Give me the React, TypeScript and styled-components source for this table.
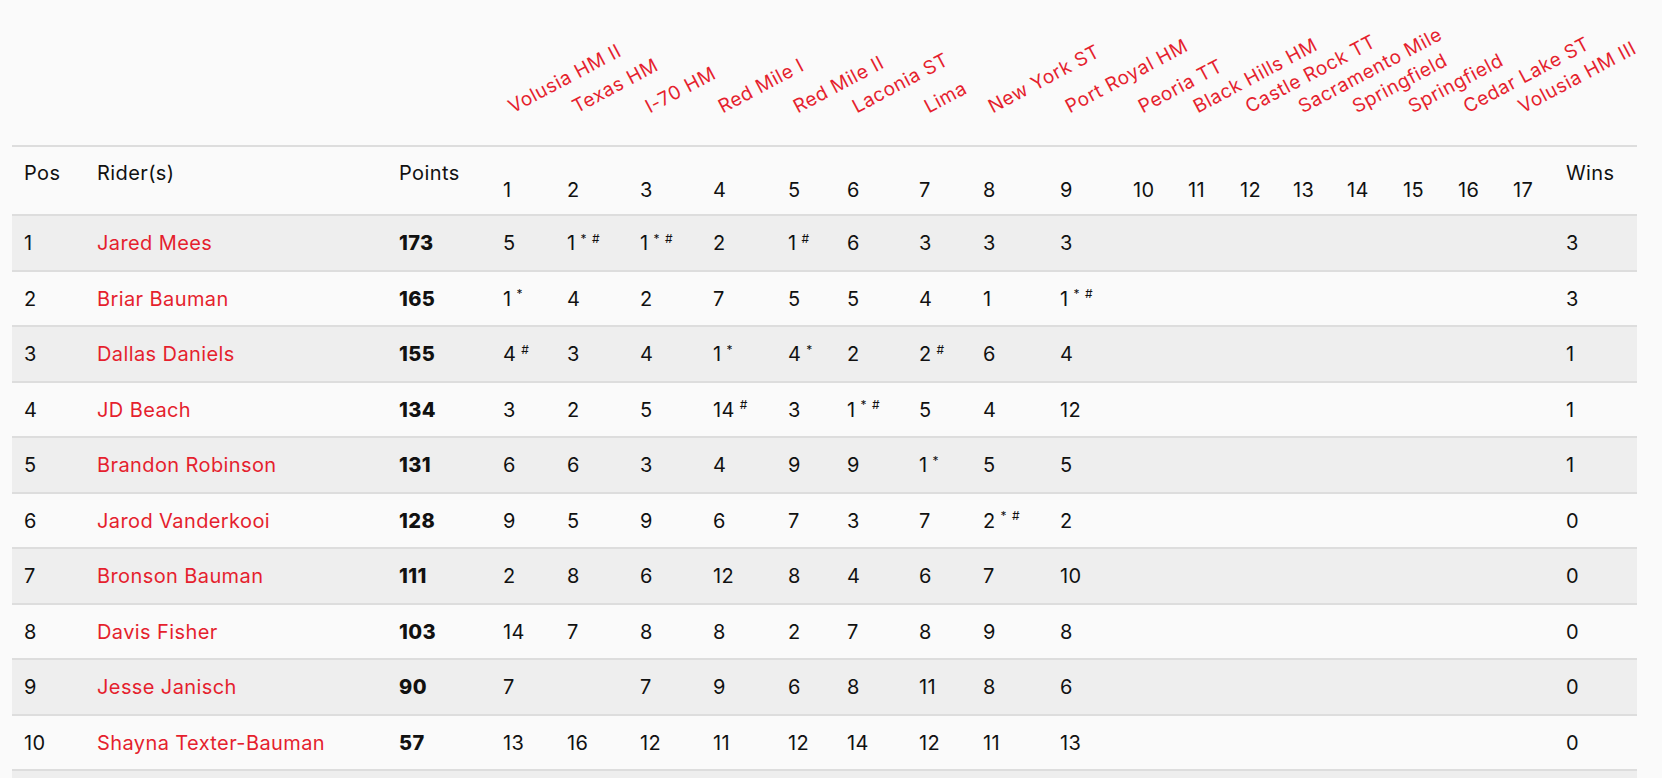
import React from "react";
import styled, { createGlobalStyle } from "styled-components";

const GlobalStyle = createGlobalStyle`
  html, body {
    margin: 0;
    padding: 0;
    background: #fafafa;
  }
  body {
    font-family: Inter, "Noto Sans", "Liberation Sans", sans-serif;
    color: #111;
  }
`;

const Page = styled.div`
  padding: 0 12px;
`;

const Table = styled.table`
  width: 1625px;
  table-layout: fixed;
  border-collapse: separate;
  border-spacing: 0;
  font-size: 20px;
  letter-spacing: 0.4px;
`;

const LabelCell = styled.th`
  height: 118px;
  padding: 0 0 27px 12px;
  vertical-align: bottom;
  text-align: left;
  font-weight: 400;
  border-bottom: 2px solid #dddddd;
`;

const RaceLabel = styled.div`
  white-space: nowrap;
  font-size: 19px;
  letter-spacing: 0.6px;
  line-height: 22px;
  color: #e51f2e;
  transform-origin: 0 100%;
  transform: translateX(12px) rotate(-28deg);
`;

const HeadCell = styled.th<{ $bottom?: boolean }>`
  height: 43px;
  padding: ${(p) => (p.$bottom ? "12px 12px 10px 12px" : "12px")};
  vertical-align: ${(p) => (p.$bottom ? "bottom" : "top")};
  text-align: left;
  font-weight: 400;
  line-height: 28px;
  white-space: nowrap;
  border-bottom: 2px solid #dddddd;
`;

const Row = styled.tr<{ $striped: boolean }>`
  background: ${(p) => (p.$striped ? "#eeeeee" : "transparent")};
`;

const Cell = styled.td<{ $bold?: boolean }>`
  padding: 13px 12px 11px 12px;
  line-height: 29.5px;
  vertical-align: middle;
  text-align: left;
  white-space: nowrap;
  font-weight: ${(p) => (p.$bold ? 800 : 400)};
  border-bottom: 2px solid #dddddd;
`;

const RiderLink = styled.a`
  color: #e51f2e;
  text-decoration: none;
`;

const Mark = styled.span`
  font-size: 12px;
  line-height: 0;
  vertical-align: 0.62em;
  margin-left: 5px;
`;

const colWidths = [
  73, 302, 104, 64, 73, 73, 75, 59, 72, 64, 77, 73, 55, 52, 53, 54, 56, 55, 55,
  53, 83,
];

const races = [
  "Volusia HM II",
  "Texas HM",
  "I-70 HM",
  "Red Mile I",
  "Red Mile II",
  "Laconia ST",
  "Lima",
  "New York ST",
  "Port Royal HM",
  "Peoria TT",
  "Black Hills HM",
  "Castle Rock TT",
  "Sacramento Mile",
  "Springfield",
  "Springfield",
  "Cedar Lake ST",
  "Volusia HM III",
];

type Rider = {
  pos: number;
  name: string;
  points: number;
  results: string[];
  wins: number;
};

const riders: Rider[] = [
  { pos: 1, name: "Jared Mees", points: 173, results: ["5", "1*#", "1*#", "2", "1#", "6", "3", "3", "3"], wins: 3 },
  { pos: 2, name: "Briar Bauman", points: 165, results: ["1*", "4", "2", "7", "5", "5", "4", "1", "1*#"], wins: 3 },
  { pos: 3, name: "Dallas Daniels", points: 155, results: ["4#", "3", "4", "1*", "4*", "2", "2#", "6", "4"], wins: 1 },
  { pos: 4, name: "JD Beach", points: 134, results: ["3", "2", "5", "14#", "3", "1*#", "5", "4", "12"], wins: 1 },
  { pos: 5, name: "Brandon Robinson", points: 131, results: ["6", "6", "3", "4", "9", "9", "1*", "5", "5"], wins: 1 },
  { pos: 6, name: "Jarod Vanderkooi", points: 128, results: ["9", "5", "9", "6", "7", "3", "7", "2*#", "2"], wins: 0 },
  { pos: 7, name: "Bronson Bauman", points: 111, results: ["2", "8", "6", "12", "8", "4", "6", "7", "10"], wins: 0 },
  { pos: 8, name: "Davis Fisher", points: 103, results: ["14", "7", "8", "8", "2", "7", "8", "9", "8"], wins: 0 },
  { pos: 9, name: "Jesse Janisch", points: 90, results: ["7", "", "7", "9", "6", "8", "11", "8", "6"], wins: 0 },
  { pos: 10, name: "Shayna Texter-Bauman", points: 57, results: ["13", "16", "12", "11", "12", "14", "12", "11", "13"], wins: 0 },
];

function Result({ value }: { value: string }) {
  const num = value.replace(/[*#]/g, "");
  const marks = value.replace(/[^*#]/g, "").split("");
  return (
    <>
      {num}
      {marks.map((m, i) => (
        <Mark key={i}>{m}</Mark>
      ))}
    </>
  );
}

export default function App() {
  return (
    <Page>
      <GlobalStyle />
      <Table>
        <colgroup>
          {colWidths.map((w, i) => (
            <col key={i} style={{ width: w }} />
          ))}
        </colgroup>
        <thead>
          <tr>
            <LabelCell />
            <LabelCell />
            <LabelCell />
            {races.map((r, i) => (
              <LabelCell key={i}>
                <RaceLabel>{r}</RaceLabel>
              </LabelCell>
            ))}
            <LabelCell />
          </tr>
          <tr>
            <HeadCell>Pos</HeadCell>
            <HeadCell>Rider(s)</HeadCell>
            <HeadCell>Points</HeadCell>
            {races.map((_, i) => (
              <HeadCell key={i} $bottom>
                {i + 1}
              </HeadCell>
            ))}
            <HeadCell>Wins</HeadCell>
          </tr>
        </thead>
        <tbody>
          {riders.map((r, idx) => (
            <Row key={r.pos} $striped={idx % 2 === 0}>
              <Cell>{r.pos}</Cell>
              <Cell>
                <RiderLink href="#">{r.name}</RiderLink>
              </Cell>
              <Cell $bold>{r.points}</Cell>
              {races.map((_, i) => (
                <Cell key={i}>
                  <Result value={r.results[i] ?? ""} />
                </Cell>
              ))}
              <Cell>{r.wins}</Cell>
            </Row>
          ))}
          <Row $striped>
            {colWidths.map((_, i) => (
              <Cell key={i}>&nbsp;</Cell>
            ))}
          </Row>
        </tbody>
      </Table>
    </Page>
  );
}
